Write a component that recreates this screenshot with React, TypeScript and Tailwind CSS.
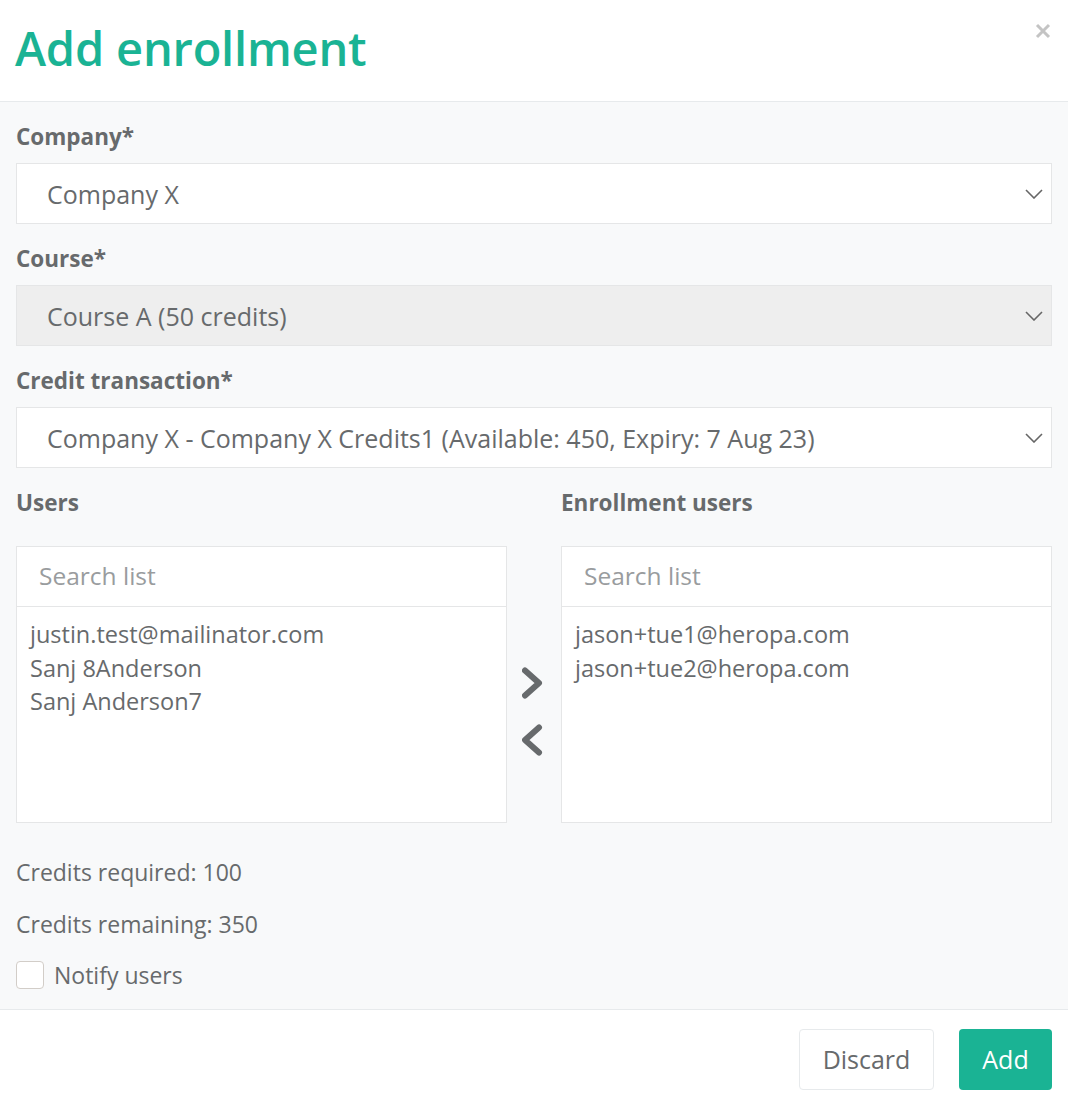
import React from 'react';

const Chevron = () => (
  <svg width="18" height="10" viewBox="0 0 18 10" fill="none" className="shrink-0">
    <path d="M1 1l8 8 8-8" stroke="#666" strokeWidth="1.6" />
  </svg>
);

const SelectBox: React.FC<{ value: string; disabled?: boolean }> = ({ value, disabled }) => (
  <div
    className={`flex items-center justify-between h-[61px] pl-[30px] pr-[8px] border border-[#e5e6e7] ${
      disabled ? 'bg-[#eeeeee]' : 'bg-white'
    }`}
  >
    <span className="text-[25px] leading-[34px]">{value}</span>
    <Chevron />
  </div>
);

const Label: React.FC<{ children: React.ReactNode; className?: string }> = ({ children, className }) => (
  <div className={`text-[22.5px] font-bold leading-[28px] ${className ?? ''}`}>{children}</div>
);

const Field: React.FC<{ label: string; children: React.ReactNode }> = ({ label, children }) => (
  <div className="mb-[21px]">
    <Label className="mb-[12px]">{label}</Label>
    {children}
  </div>
);

const ListBox: React.FC<{ items: string[] }> = ({ items }) => (
  <div className="flex flex-col">
    <div className="h-[61px] bg-white border border-[#e5e6e7] flex items-center px-[22px]">
      <span className="text-[24.5px] text-[#999c9e]">Search list</span>
    </div>
    <div className="h-[216px] bg-white border border-t-0 border-[#e5e6e7] pt-[11px] px-[13px]">
      {items.map((it) => (
        <div key={it} className="text-[23.5px] leading-[33.5px]">
          {it}
        </div>
      ))}
    </div>
  </div>
);

export default function App() {
  return (
    <div
      className="w-[1068px] h-[1106px] bg-white text-[#676a6c] flex flex-col overflow-hidden"
      style={{ fontFamily: '"Open Sans", "Liberation Sans", sans-serif' }}
    >
      {/* Header */}
      <header className="h-[102px] shrink-0 border-b border-[#e7eaec] flex justify-between pl-[15px] pr-[17px]">
        <h1 className="text-[47px] font-semibold text-[#1ab394] self-center mt-[-4px] tracking-[-0.2px]">
          Add enrollment
        </h1>
        <svg width="16" height="16" viewBox="0 0 16 16" className="mt-[23px]">
          <path d="M2 2l12 12M14 2L2 14" stroke="#c4c4c4" strokeWidth="3" />
        </svg>
      </header>

      {/* Body */}
      <main className="flex-1 bg-[#f8f9fa] px-[16px] pt-[21px] border-b border-[#e7eaec]">
        <Field label="Company*">
          <SelectBox value="Company X" />
        </Field>
        <Field label="Course*">
          <SelectBox value="Course A (50 credits)" disabled />
        </Field>
        <Field label="Credit transaction*">
          <SelectBox value="Company X - Company X Credits1 (Available: 450, Expiry: 7 Aug 23)" />
        </Field>

        <div className="grid grid-cols-[1fr_54px_1fr]">
          <Label className="mb-[29px]">Users</Label>
          <div />
          <Label className="mb-[29px]">Enrollment users</Label>

          <ListBox items={['justin.test@mailinator.com', 'Sanj 8Anderson', 'Sanj Anderson7']} />
          <div className="flex flex-col items-center pt-[119px] gap-[21px]">
            <svg width="24" height="36" viewBox="0 0 24 36">
              <path d="M3 5.5L17 18 3 30.5" stroke="#676a6c" strokeWidth="6" fill="none" strokeLinecap="round" strokeLinejoin="round" />
            </svg>
            <svg width="24" height="36" viewBox="0 0 24 36">
              <path d="M17 5.5L3 18 17 30.5" stroke="#676a6c" strokeWidth="6" fill="none" strokeLinecap="round" strokeLinejoin="round" />
            </svg>
          </div>
          <ListBox items={['jason+tue1@heropa.com', 'jason+tue2@heropa.com']} />
        </div>

        <div className="mt-[34px] text-[23px] leading-[30px]">Credits required: 100</div>
        <div className="mt-[22px] text-[23px] leading-[30px]">Credits remaining: 350</div>
        <label className="mt-[21px] flex items-center gap-[10px]">
          <span className="w-[28px] h-[28px] bg-white border border-[#d2cdc8] rounded-[4px]" />
          <span className="text-[23px] leading-[30px]">Notify users</span>
        </label>
      </main>

      {/* Footer */}
      <footer className="h-[96px] shrink-0 flex items-start justify-end gap-[25px] pt-[19px] pr-[16px]">
        <button className="h-[61px] w-[135px] bg-white border border-[#e7eaec] rounded-[4px] text-[25px] text-[#676a6c]">
          Discard
        </button>
        <button className="h-[61px] w-[93px] bg-[#1ab394] rounded-[4px] text-[25px] text-white">
          Add
        </button>
      </footer>
    </div>
  );
}
